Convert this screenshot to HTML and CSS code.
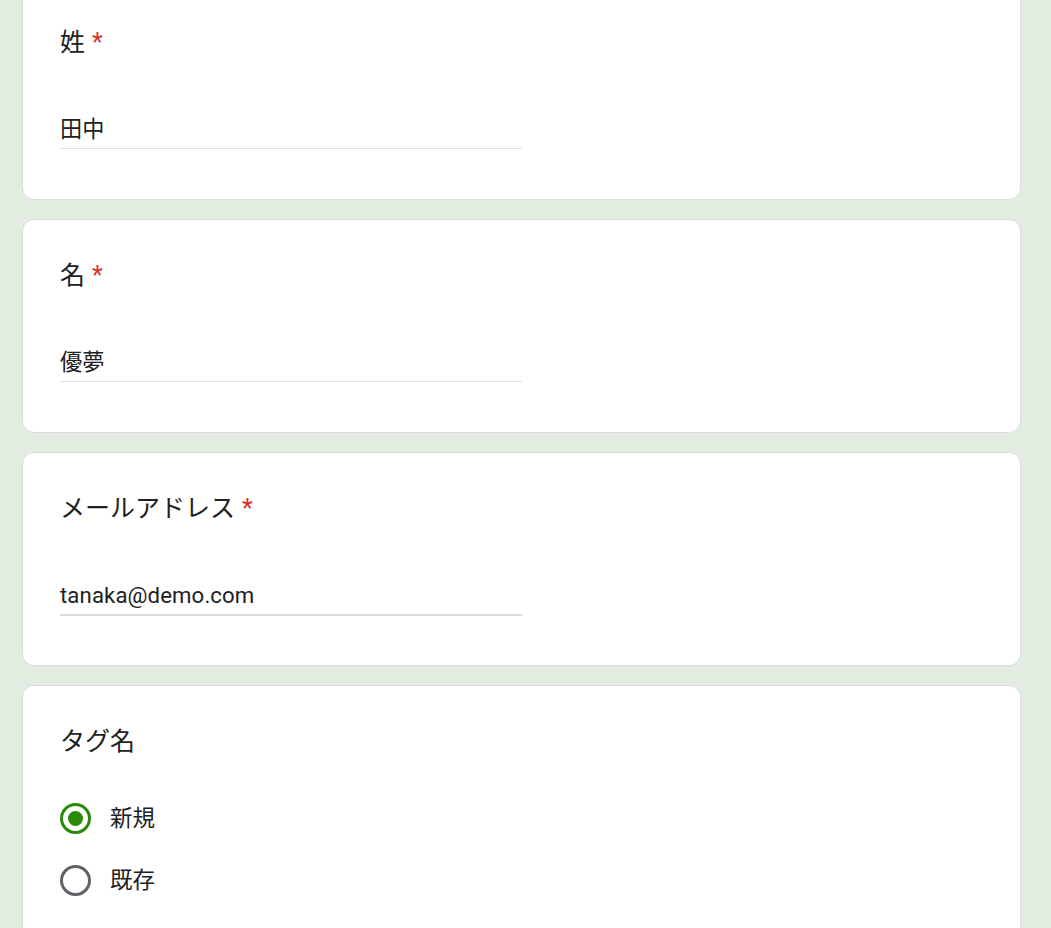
FILE: index.html
```html
<!DOCTYPE html>
<html lang="ja">
<head>
<meta charset="utf-8">
<title>フォーム</title>
<link rel="stylesheet" href="styles.css">
</head>
<body>
<main class="form">
  <section class="card">
    <div class="q-title">姓<span class="req">*</span></div>
    <div class="answer"><span class="answer-text">田中</span></div>
  </section>
  <section class="card">
    <div class="q-title">名<span class="req">*</span></div>
    <div class="answer"><span class="answer-text">優夢</span></div>
  </section>
  <section class="card">
    <div class="q-title">メールアドレス<span class="req">*</span></div>
    <div class="answer answer-active"><span class="answer-text">tanaka@demo.com</span></div>
  </section>
  <section class="card card-last">
    <div class="q-title">タグ名</div>
    <div class="options">
      <label class="option">
        <span class="radio radio-checked"><span class="dot"></span></span>
        <span class="option-label">新規</span>
      </label>
      <label class="option">
        <span class="radio"></span>
        <span class="option-label">既存</span>
      </label>
    </div>
    <div class="clear-row"><span class="clear-btn">選択を解除</span></div>
  </section>
</main>
</body>
</html>
```

FILE: styles.css
```css
html, body {
  margin: 0;
  padding: 0;
  background: #e2ece0;
  overflow: hidden;
}

body {
  font-family: Roboto, "Noto Sans CJK JP", sans-serif;
  color: #202124;
}

.form {
  display: flex;
  flex-direction: column;
  gap: 19px;
  margin-top: -14px;
  padding-left: 22px;
  width: 999px;
}

.card {
  box-sizing: border-box;
  height: 214px;
  background: #fff;
  border: 1px solid #dadce0;
  border-radius: 12px;
  padding: 36px 37px 50px;
}

.card-last {
  height: 300px;
}

.q-title {
  font-size: 25px;
  line-height: 39px;
  height: 36px;
  color: #202124;
}

.req {
  color: #d93025;
  padding-left: 7px;
  font-family: Roboto, sans-serif;
}

.answer {
  margin-top: 48px;
  width: 462px;
  padding-top: 4px;
  height: 37px;
  border-bottom: 1px solid #e0e0e0;
}

.answer-active {
  border-bottom: 2px solid #dadada;
}

.answer-text {
  font-size: 22.2px;
  line-height: 36px;
  color: #202124;
  letter-spacing: 0.1px;
}

.options {
  margin-top: 29px;
  display: flex;
  flex-direction: column;
}

.option {
  height: 62px;
  display: flex;
  align-items: center;
  gap: 19px;
}

.radio {
  box-sizing: border-box;
  width: 31px;
  height: 31px;
  border: 3px solid #5f6368;
  border-radius: 50%;
  display: flex;
  align-items: center;
  justify-content: center;
  flex: none;
}

.radio-checked {
  border-color: #2a8a08;
}

.dot {
  width: 15px;
  height: 15px;
  border-radius: 50%;
  background: #2a8a08;
}

.option-label {
  font-size: 22.5px;
  line-height: 30px;
  color: #202124;
}

.clear-row {
  display: flex;
  justify-content: flex-end;
  margin-top: 14px;
  padding-right: 22px;
}

.clear-btn {
  font-size: 21px;
  line-height: 30px;
  color: #5f6368;
  font-weight: 500;
}
```
